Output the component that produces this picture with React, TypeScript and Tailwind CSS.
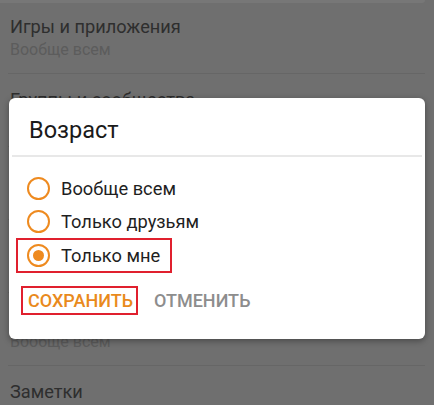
import React from "react";

type Item = { title: string; sub: string };

const items: Item[] = [
  { title: "Группы и сообщества", sub: "Вообще всем" },
  { title: "Фотографии", sub: "Вообще всем" },
  { title: "Подарки", sub: "Вообще всем" },
  { title: "Возраст", sub: "Вообще всем" },
  { title: "Заметки", sub: "Вообще всем" },
];

function Row({ item, first }: { item: Item; first?: boolean }) {
  return (
    <div>
      <div className={first ? "h-[70px] pt-[13px] pl-[10px]" : "h-[72px] pt-[15px] pl-[10px]"}>
        <div className="text-[18.2px] leading-[21px] text-[#2e2e2e]">{item.title}</div>
        <div className="mt-[3px] text-[16px] leading-[19px] text-[#5c5c5c]">{item.sub}</div>
      </div>
      <div className="h-px ml-[8px] mr-[9px] bg-[#666666]" />
    </div>
  );
}

function Radio({ checked }: { checked?: boolean }) {
  return (
    <span className="flex items-center justify-center w-[23px] h-[23px] rounded-full border-[2.5px] border-[#ee8a1f] shrink-0">
      {checked && <span className="w-[11px] h-[11px] rounded-full bg-[#ee8a1f]" />}
    </span>
  );
}

export default function App() {
  return (
    <div
      className="relative w-[434px] h-[405px] overflow-hidden bg-[#6f6f6f]"
      style={{ fontFamily: "Roboto, 'Noto Sans', sans-serif" }}
    >
      <div className="h-[3px] mr-[9px] bg-[#777777] rounded-br-[4px]" />
      <Row item={{ title: "Игры и приложения", sub: "Вообще всем" }} first />
      {items.map((it, i) => (
        <Row key={i} item={it} />
      ))}

      <div className="absolute left-[9px] top-[98px] w-[416px] h-[241px] bg-white rounded-[6px] shadow-[0_2px_6px_rgba(0,0,0,0.35)]">
        <div className="pt-[19px] pl-[20px] text-[23.5px] leading-[27px] text-[#1a1a1a]">Возраст</div>
        <div className="mt-[11px] mx-[3px] h-[2px] bg-[#e8e8e8]" />
        <div className="mt-[15px] flex flex-col">
          <div className="flex items-center h-[33px] pl-[18px] gap-[11px]">
            <Radio />
            <span className="text-[18.3px] leading-[22px] text-[#1f1f1f]">Вообще всем</span>
          </div>
          <div className="flex items-center h-[33px] pl-[18px] gap-[11px]">
            <Radio />
            <span className="text-[18.3px] leading-[22px] text-[#1f1f1f]">Только друзьям</span>
          </div>
          <div className="flex items-center h-[35px] w-[156px] ml-[7px] pl-[9px] gap-[11px] border-2 border-[#e0202e]">
            <Radio checked />
            <span className="text-[18.3px] leading-[22px] text-[#1f1f1f]">Только мне</span>
          </div>
        </div>
        <div className="mt-[13px] ml-[12px] flex items-center">
          <div className="flex items-center h-[29px] w-[117px] pl-[5px] border-2 border-[#e0202e]">
            <span className="text-[18px] leading-[20px] font-medium text-[#e98a1c]">СОХРАНИТЬ</span>
          </div>
          <span className="ml-[16px] text-[18px] leading-[20px] font-medium text-[#8d8d8d]">ОТМЕНИТЬ</span>
        </div>
      </div>
    </div>
  );
}
